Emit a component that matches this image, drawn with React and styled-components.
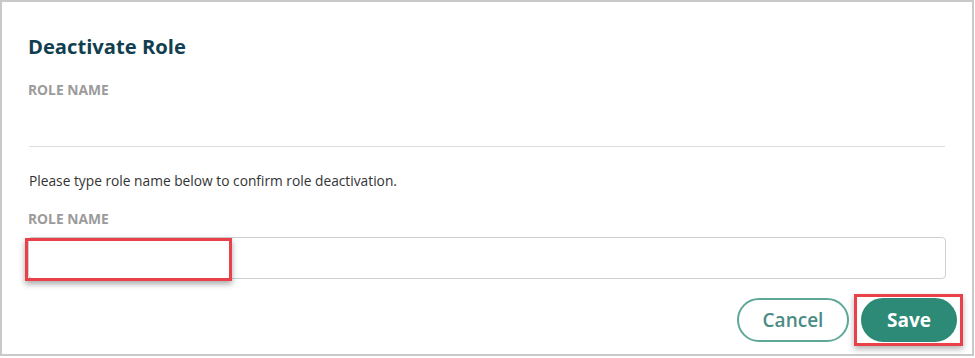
import React from "react";
import styled, { createGlobalStyle } from "styled-components";

const GlobalStyle = createGlobalStyle`
  html, body {
    margin: 0;
    padding: 0;
    background: #fff;
  }
  body {
    font-family: "Open Sans", "Noto Sans", "Liberation Sans", sans-serif;
  }
`;

const Frame = styled.div`
  box-sizing: border-box;
  width: 974px;
  height: 356px;
  border: 2px solid #c9c9c9;
  padding: 31px 27px 0 26px;
  display: flex;
  flex-direction: column;
`;

const Title = styled.h2`
  margin: 0;
  font-size: 20.2px;
  font-weight: 700;
  color: #123f50;
  line-height: 26px;
`;

const Label = styled.div`
  font-size: 13.8px;
  font-weight: 700;
  color: #9b9b9b;
  line-height: 16px;
  margin-top: ${(p) => p.$top}px;
`;

const Value = styled.div`
  height: 48px;
`;

const Divider = styled.hr`
  margin: 0 0 0 1px;
  border: none;
  border-top: 1px solid #dcdcdc;
`;

const Hint = styled.p`
  margin: 25px 0 0 1px;
  font-size: 13.75px;
  color: #333;
  line-height: 18px;
`;

const Field = styled.div`
  position: relative;
  margin-top: 10px;
`;

const Input = styled.input`
  box-sizing: border-box;
  width: 918px;
  height: 42px;
  margin: 0;
  border: 1px solid #cfcfcf;
  border-radius: 4px;
  background: #fff;
  outline: none;
`;

const Highlight = styled.div`
  position: absolute;
  left: -3px;
  top: 1px;
  width: 207px;
  height: 43px;
  box-sizing: border-box;
  border: 3px solid #e8414a;
  box-shadow: 0 3px 6px rgba(0, 0, 0, 0.35);
  pointer-events: none;
`;

const Footer = styled.div`
  display: flex;
  justify-content: flex-end;
  align-items: center;
  gap: 5px;
  margin-top: 15px;
  margin-right: -18px;
`;

const Button = styled.button`
  box-sizing: border-box;
  height: 44px;
  border-radius: 22px;
  font-family: inherit;
  font-size: 19px;
  cursor: pointer;
  padding: 0;
  width: ${(p) => p.$width}px;
  border: 2px solid ${(p) => (p.$primary ? "#2c8a76" : "#5ea898")};
  background: ${(p) => (p.$primary ? "#2c8a76" : "#fff")};
  color: ${(p) => (p.$primary ? "#fff" : "#4b8c84")};
  font-weight: ${(p) => (p.$primary ? 700 : 600)};
`;

const Marked = styled.div`
  border: 3px solid #e8414a;
  padding: 1px 3px 1px 4px;
  box-shadow: 0 3px 6px rgba(0, 0, 0, 0.3);
  display: flex;
`;

export default function App() {
  return (
    <>
      <GlobalStyle />
      <Frame>
        <Title>Deactivate Role</Title>
        <Label $top={23}>ROLE NAME</Label>
        <Value />
        <Divider />
        <Hint>Please type role name below to confirm role deactivation.</Hint>
        <Label $top={21}>ROLE NAME</Label>
        <Field>
          <Input type="text" />
          <Highlight />
        </Field>
        <Footer>
          <Button $width={112}>Cancel</Button>
          <Marked>
            <Button $primary $width={96}>
              Save
            </Button>
          </Marked>
        </Footer>
      </Frame>
    </>
  );
}
